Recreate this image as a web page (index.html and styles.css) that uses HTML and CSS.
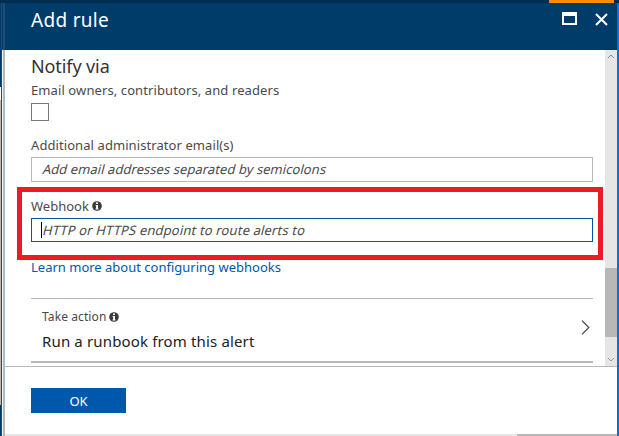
FILE: index.html
```html
<!DOCTYPE html>
<html lang="en">
<head>
<meta charset="utf-8">
<title>Add rule</title>
<link rel="stylesheet" href="styles.css">
</head>
<body>
<div class="portal">
  <div class="topbar"><span class="progress"></span></div>
  <aside class="edge"><div class="behind"><i class="b1"></i><i class="b2"></i><i class="b3"></i><i class="b4"></i></div><div class="line"></div><div class="gap"></div><div class="gutter"></div></aside>
  <main class="blade">
    <header class="head">
      <h1>Add rule</h1>
      <svg class="max" width="15" height="13" viewBox="0 0 15 13"><path fill="#fff" fill-rule="evenodd" d="M0 0H15V13H0ZM2 4V11H13V4Z"/></svg>
      <svg class="close" width="13" height="13" viewBox="0 0 13 13"><path d="M1 1L12 12M12 1L1 12" stroke="#fff" stroke-width="2"/></svg>
    </header>
    <section class="body">
      <div class="form">
        <h2><span>Notify via</span></h2>
        <label class="l-owners"><span>Email owners, contributors, and readers</span></label>
        <div class="check"></div>
        <label class="l-admin"><span>Additional administrator email(s)</span></label>
        <div class="field"><span class="hint t-add">Add email addresses separated by semicolons</span></div>
        <div class="webhook">
          <label><span class="t-web">Webhook</span><svg class="info" width="10" height="10" viewBox="0 0 10 10"><circle cx="5" cy="5" r="4.8" fill="#3a3a3a"/><path d="M4 1.6H6V3H4ZM3.5 4H6V7.5H6.6V8.4H3.5V7.5H4.1V4.8H3.5Z" fill="#fff"/></svg></label>
          <div class="field focus"><i class="caret"></i><span class="hint t-http">HTTP or HTTPS endpoint to route alerts to</span></div>
        </div>
        <a class="learn"><span>Learn more about configuring webhooks</span></a>
        <div class="action">
          <div class="copy">
            <div class="take"><span class="t-take">Take action</span><svg class="info" width="10" height="10" viewBox="0 0 10 10"><circle cx="5" cy="5" r="4.8" fill="#3a3a3a"/><path d="M4 1.6H6V3H4ZM3.5 4H6V7.5H6.6V8.4H3.5V7.5H4.1V4.8H3.5Z" fill="#fff"/></svg></div>
            <div class="run"><span>Run a runbook from this alert</span></div>
          </div>
          <svg class="chev" width="9" height="15" viewBox="0 0 9 15"><path d="M1 .7L7.8 7.5L1 14.3" fill="none" stroke="#444" stroke-width="1.2"/></svg>
        </div>
      </div>
      <div class="scroll">
        <svg width="8" height="5" viewBox="0 0 8 5"><path d="M1 4L4 1L7 4" fill="none" stroke="#888"/></svg>
        <div class="thumb"></div>
        <svg width="8" height="5" viewBox="0 0 8 5"><path d="M1 1L4 4L7 1" fill="none" stroke="#999"/></svg>
      </div>
    </section>
    <footer><button><span>OK</span></button></footer>
    <div class="hscroll"><i></i></div>
  </main>
  <div class="right"></div>
</div>
</body>
</html>
```
FILE: styles.css
```css
* { box-sizing: border-box; margin: 0; padding: 0; }
body { width: 619px; height: 436px; overflow: hidden; font: 13px/18px "Noto Sans", sans-serif; color: #4a4a4a; background: #fff; }
svg, i { display: block; }
span { white-space: nowrap; }
.portal { display: grid; grid-template: 3px 433px / 5px 612px 2px; }
.topbar { grid-column: 1 / 4; background: #002c50; display: flex; padding-left: 549px; }
.progress { width: 65px; background: #ff8c00; }
.edge { display: grid; grid-template-columns: 1px 1px 1px 2px; }
.behind { display: grid; grid-template-rows: 84px 13px 305px 31px; }
.b1, .b4 { background: #003a6a; }
.b2 { background: #fff; }
.b3 { background: #b8b8b8; }
.line { background: #1f4c75; }
.gap { background: linear-gradient(#003c6a 47px, #f0f4f8 47px); }
.gutter { background: linear-gradient(#1f4c75 47px, #b8b8b8 47px); }
.blade { display: grid; grid-template-rows: 47px 316px 68px 2px; }
.head { background: #003c6a; display: flex; align-items: flex-start; padding-left: 26px; color: #fff; }
h1 { font-size: 19px; font-weight: 400; line-height: 26px; letter-spacing: .3px; padding-top: 4px; flex: 1; }
.max { margin: 9px 18px 0 0; }
.close { margin: 10px 9px 0 0; }
.body { display: grid; grid-template-columns: 600px 12px; overflow: hidden; }
.form { padding: 3px 12px 0 26px; }
h2 { font-size: 18px; font-weight: 400; line-height: 26px; letter-spacing: -.1px; height: 28px; color: #333; }
label { display: block; }
.l-owners { letter-spacing: .1px; }
.l-admin { letter-spacing: .08px; }
.check { width: 18px; height: 18px; border: 1px solid #777; margin: 4px 0 15px; }
.field { height: 25px; border: 1px solid #b8b8b8; padding-left: 11px; margin-top: 3px; line-height: 23px; display: flex; align-items: center; }
.hint { display: block; transform: skewX(-14deg); }
.t-add { letter-spacing: .06px; }
.t-http { letter-spacing: .15px; }
.webhook { border: 5px solid #ed1c24; margin: 5px -10px 0 -14px; height: 73px; padding: 5px 5px 0 9px; }
.webhook label { display: flex; height: 18px; align-items: center; }
.info { margin-left: 3px; }
.focus { height: 24px; border-color: #0058ad; padding-left: 9px; }
.caret { width: 1px; height: 16px; background: #000; margin-right: 1px; }
.learn { display: block; color: #0058ad; line-height: 17px; height: 16px; margin-top: -1px; }
.action { border-top: 1px solid #b8b8b8; border-bottom: 2px solid #b8b8b8; height: 65px; margin-top: 23px; display: flex; justify-content: space-between; padding: 0 3px 0 11px; }
.take { display: flex; align-items: center; font-size: 12px; letter-spacing: .1px; height: 18px; margin-top: 9px; }
.run { font-size: 15px; line-height: 22px; letter-spacing: .15px; margin-top: 4px; color: #222; }
.chev { margin-top: 21px; }
.scroll { background: #e6e6e6; display: grid; grid-template-rows: 218px 69px 29px; justify-items: center; }
.scroll svg:first-child { margin-top: 4px; }
.scroll svg:last-child { margin-top: 20px; }
.thumb { background: #b8b8b8; width: 12px; }
footer { border-top: 1px solid #b8b8b8; padding: 21px 26px; }
button { display: block; width: 95px; height: 25px; border: 0; padding-top: 1px; background: #0058ad; color: #fff; font: 13px/24px "Noto Sans", sans-serif; }
.hscroll { background: #e6e6e6; padding-left: 512px; }
.hscroll i { background: #b8b8b8; height: 2px; }
.right { background: #1070c8; }
```
